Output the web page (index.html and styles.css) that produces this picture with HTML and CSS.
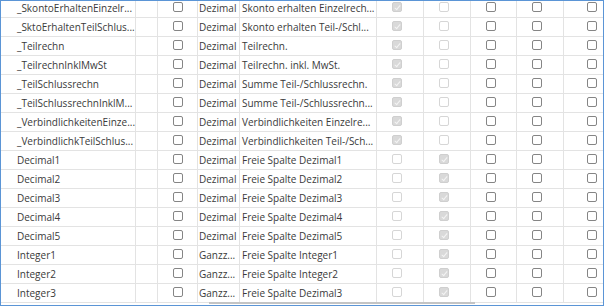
FILE: index.html
```html
<!DOCTYPE html>
<html lang="de">
<head>
    <meta charset="UTF-8">
    <title>Spalten</title>
    <link rel="stylesheet" href="styles.css">
</head>
<body>

    <div class="gridFrame">
        <div class="gridBody">

            <div class="row">
                <div class="c name">_SkontoErhaltenEinzelr...</div>
                <div class="c gap"></div>
                <div class="c flag"><span class="cb"></span></div>
                <div class="c type">Dezimal</div>
                <div class="c desc">Skonto erhalten Einzelrech...</div>
                <div class="c opt"><span class="cb on"></span></div>
                <div class="c opt"><span class="cb off"></span></div>
                <div class="c opt"><span class="cb"></span></div>
                <div class="c opt"><span class="cb"></span></div>
                <div class="c opt last"><span class="cb"></span></div>
            </div>

            <div class="row">
                <div class="c name">_SktoErhaltenTeilSchlus...</div>
                <div class="c gap"></div>
                <div class="c flag"><span class="cb"></span></div>
                <div class="c type">Dezimal</div>
                <div class="c desc">Skonto erhalten Teil-/Schl...</div>
                <div class="c opt"><span class="cb on"></span></div>
                <div class="c opt"><span class="cb off"></span></div>
                <div class="c opt"><span class="cb"></span></div>
                <div class="c opt"><span class="cb"></span></div>
                <div class="c opt last"><span class="cb"></span></div>
            </div>

            <div class="row">
                <div class="c name">_Teilrechn</div>
                <div class="c gap"></div>
                <div class="c flag"><span class="cb"></span></div>
                <div class="c type">Dezimal</div>
                <div class="c desc">Teilrechn.</div>
                <div class="c opt"><span class="cb on"></span></div>
                <div class="c opt"><span class="cb off"></span></div>
                <div class="c opt"><span class="cb"></span></div>
                <div class="c opt"><span class="cb"></span></div>
                <div class="c opt last"><span class="cb"></span></div>
            </div>

            <div class="row">
                <div class="c name">_TeilrechnInklMwSt</div>
                <div class="c gap"></div>
                <div class="c flag"><span class="cb"></span></div>
                <div class="c type">Dezimal</div>
                <div class="c desc">Teilrechn. inkl. MwSt.</div>
                <div class="c opt"><span class="cb on"></span></div>
                <div class="c opt"><span class="cb off"></span></div>
                <div class="c opt"><span class="cb"></span></div>
                <div class="c opt"><span class="cb"></span></div>
                <div class="c opt last"><span class="cb"></span></div>
            </div>

            <div class="row">
                <div class="c name">_TeilSchlussrechn</div>
                <div class="c gap"></div>
                <div class="c flag"><span class="cb"></span></div>
                <div class="c type">Dezimal</div>
                <div class="c desc">Summe Teil-/Schlussrechn.</div>
                <div class="c opt"><span class="cb on"></span></div>
                <div class="c opt"><span class="cb off"></span></div>
                <div class="c opt"><span class="cb"></span></div>
                <div class="c opt"><span class="cb"></span></div>
                <div class="c opt last"><span class="cb"></span></div>
            </div>

            <div class="row">
                <div class="c name">_TeilSchlussrechnInklM...</div>
                <div class="c gap"></div>
                <div class="c flag"><span class="cb"></span></div>
                <div class="c type">Dezimal</div>
                <div class="c desc">Summe Teil-/Schlussrechn...</div>
                <div class="c opt"><span class="cb on"></span></div>
                <div class="c opt"><span class="cb off"></span></div>
                <div class="c opt"><span class="cb"></span></div>
                <div class="c opt"><span class="cb"></span></div>
                <div class="c opt last"><span class="cb"></span></div>
            </div>

            <div class="row">
                <div class="c name">_VerbindlichkeitenEinze...</div>
                <div class="c gap"></div>
                <div class="c flag"><span class="cb"></span></div>
                <div class="c type">Dezimal</div>
                <div class="c desc">Verbindlichkeiten Einzelre...</div>
                <div class="c opt"><span class="cb on"></span></div>
                <div class="c opt"><span class="cb off"></span></div>
                <div class="c opt"><span class="cb"></span></div>
                <div class="c opt"><span class="cb"></span></div>
                <div class="c opt last"><span class="cb"></span></div>
            </div>

            <div class="row">
                <div class="c name">_VerbindlichkTeilSchlus...</div>
                <div class="c gap"></div>
                <div class="c flag"><span class="cb"></span></div>
                <div class="c type">Dezimal</div>
                <div class="c desc">Verbindlichkeiten Teil-/Sch...</div>
                <div class="c opt"><span class="cb on"></span></div>
                <div class="c opt"><span class="cb off"></span></div>
                <div class="c opt"><span class="cb"></span></div>
                <div class="c opt"><span class="cb"></span></div>
                <div class="c opt last"><span class="cb"></span></div>
            </div>

            <div class="row">
                <div class="c name">Decimal1</div>
                <div class="c gap"></div>
                <div class="c flag"><span class="cb"></span></div>
                <div class="c type">Dezimal</div>
                <div class="c desc">Freie Spalte Dezimal1</div>
                <div class="c opt"><span class="cb off"></span></div>
                <div class="c opt"><span class="cb on"></span></div>
                <div class="c opt"><span class="cb"></span></div>
                <div class="c opt"><span class="cb"></span></div>
                <div class="c opt last"><span class="cb"></span></div>
            </div>

            <div class="row">
                <div class="c name">Decimal2</div>
                <div class="c gap"></div>
                <div class="c flag"><span class="cb"></span></div>
                <div class="c type">Dezimal</div>
                <div class="c desc">Freie Spalte Dezimal2</div>
                <div class="c opt"><span class="cb off"></span></div>
                <div class="c opt"><span class="cb on"></span></div>
                <div class="c opt"><span class="cb"></span></div>
                <div class="c opt"><span class="cb"></span></div>
                <div class="c opt last"><span class="cb"></span></div>
            </div>

            <div class="row">
                <div class="c name">Decimal3</div>
                <div class="c gap"></div>
                <div class="c flag"><span class="cb"></span></div>
                <div class="c type">Dezimal</div>
                <div class="c desc">Freie Spalte Dezimal3</div>
                <div class="c opt"><span class="cb off"></span></div>
                <div class="c opt"><span class="cb on"></span></div>
                <div class="c opt"><span class="cb"></span></div>
                <div class="c opt"><span class="cb"></span></div>
                <div class="c opt last"><span class="cb"></span></div>
            </div>

            <div class="row">
                <div class="c name">Decimal4</div>
                <div class="c gap"></div>
                <div class="c flag"><span class="cb"></span></div>
                <div class="c type">Dezimal</div>
                <div class="c desc">Freie Spalte Dezimal4</div>
                <div class="c opt"><span class="cb off"></span></div>
                <div class="c opt"><span class="cb on"></span></div>
                <div class="c opt"><span class="cb"></span></div>
                <div class="c opt"><span class="cb"></span></div>
                <div class="c opt last"><span class="cb"></span></div>
            </div>

            <div class="row">
                <div class="c name">Decimal5</div>
                <div class="c gap"></div>
                <div class="c flag"><span class="cb"></span></div>
                <div class="c type">Dezimal</div>
                <div class="c desc">Freie Spalte Dezimal5</div>
                <div class="c opt"><span class="cb off"></span></div>
                <div class="c opt"><span class="cb on"></span></div>
                <div class="c opt"><span class="cb"></span></div>
                <div class="c opt"><span class="cb"></span></div>
                <div class="c opt last"><span class="cb"></span></div>
            </div>

            <div class="row">
                <div class="c name">Integer1</div>
                <div class="c gap"></div>
                <div class="c flag"><span class="cb"></span></div>
                <div class="c type">Ganzz...</div>
                <div class="c desc">Freie Spalte Integer1</div>
                <div class="c opt"><span class="cb off"></span></div>
                <div class="c opt"><span class="cb on"></span></div>
                <div class="c opt"><span class="cb"></span></div>
                <div class="c opt"><span class="cb"></span></div>
                <div class="c opt last"><span class="cb"></span></div>
            </div>

            <div class="row">
                <div class="c name">Integer2</div>
                <div class="c gap"></div>
                <div class="c flag"><span class="cb"></span></div>
                <div class="c type">Ganzz...</div>
                <div class="c desc">Freie Spalte Integer2</div>
                <div class="c opt"><span class="cb off"></span></div>
                <div class="c opt"><span class="cb on"></span></div>
                <div class="c opt"><span class="cb"></span></div>
                <div class="c opt"><span class="cb"></span></div>
                <div class="c opt last"><span class="cb"></span></div>
            </div>

            <div class="row">
                <div class="c name">Integer3</div>
                <div class="c gap"></div>
                <div class="c flag"><span class="cb"></span></div>
                <div class="c type">Ganzz...</div>
                <div class="c desc">Freie Spalte Dezimal3</div>
                <div class="c opt"><span class="cb off"></span></div>
                <div class="c opt"><span class="cb on"></span></div>
                <div class="c opt"><span class="cb"></span></div>
                <div class="c opt"><span class="cb"></span></div>
                <div class="c opt last"><span class="cb"></span></div>
            </div>

        </div>
        <div class="hScroll"></div>
    </div>

</body>
</html>
```

FILE: styles.css
```css
html {
    margin: 0;
    padding: 0;
}

body {
    margin: 0;
    padding: 0;
    background: #fff;
    font-family: "Open Sans", "Noto Sans", sans-serif;
    font-size: 10px;
    color: #3a3a3a;
}

.gridFrame {
    position: relative;
    box-sizing: border-box;
    width: 604px;
    height: 306px;
    border: 1px solid #5b95d6;
    overflow: hidden;
}

.gridBody {
    margin-top: -2px;
    width: 625px;
}

.row {
    display: flex;
    box-sizing: border-box;
    height: 19px;
    border-bottom: 1px solid #e3e3e3;
}

.c {
    box-sizing: border-box;
    flex: none;
    display: flex;
    align-items: center;
    border-right: 1px solid #e3e3e3;
    overflow: hidden;
    white-space: nowrap;
}

.name {
    width: 135px;
    padding: 0 2px 0 16px;
}

.gap {
    width: 22px;
}

.flag {
    width: 40px;
    justify-content: center;
}

.type {
    width: 42px;
    padding-left: 1px;
}

.desc {
    width: 137px;
    padding-left: 2px;
}

.opt {
    width: 47px;
    justify-content: center;
    padding-right: 6px;
}

.opt:nth-child(8) {
    width: 46px;
}

.opt.last {
    width: 62px;
    border-right: none;
}

/* checkboxes */

.cb {
    position: relative;
    box-sizing: border-box;
    display: block;
    width: 10px;
    height: 10px;
    margin-bottom: 2px;
    border: 1px solid #858585;
    border-radius: 2px;
    background: #fff;
}

.cb.off {
    border-color: #d6d6d6;
}

.cb.on {
    border-color: #cfcfcf;
    background: #d9d9d9;
}

.cb.on::after {
    content: "";
    position: absolute;
    left: 2.5px;
    top: 0.5px;
    width: 2px;
    height: 5px;
    border-right: 1.3px solid #f4f4f4;
    border-bottom: 1.3px solid #f4f4f4;
    transform: rotate(40deg);
}

.hScroll {
    position: absolute;
    left: 208px;
    bottom: 1px;
    width: 266px;
    height: 2px;
    background: #c4c4c4;
}
```
